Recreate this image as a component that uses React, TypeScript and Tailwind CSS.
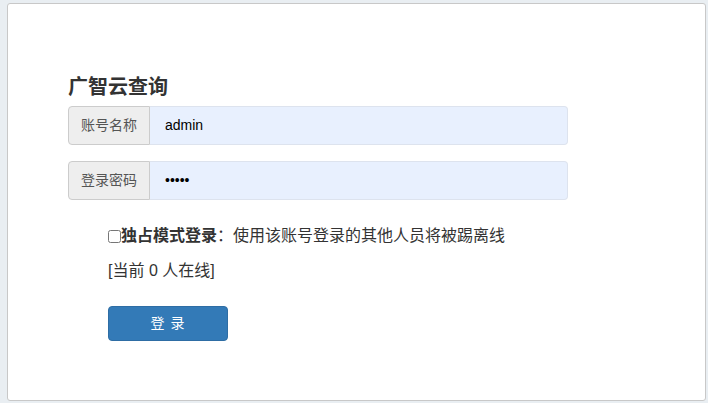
import { useState } from 'react';

// 广智云查询 — 登录页
const FONT = "font-['Liberation_Sans','Noto_Sans_CJK_SC',sans-serif]";

export default function App() {
  const [user, setUser] = useState('admin');
  const [pwd, setPwd] = useState('admin');
  const [exclusive, setExclusive] = useState(false);

  return (
    <div className={`h-[403px] w-[708px] bg-[#e9eef2] pl-[7px] pt-[3px] pr-[2px] pb-[2px] ${FONT}`}>
      <div className="h-full rounded-[3px] border border-[#c8c8c8] bg-white pl-[60px] pt-[70px]">
        <h3 className="text-[20px] font-bold leading-[26px] text-[#333]">广智云查询</h3>

        <div className="mt-[6px] flex w-[500px] flex-col gap-[16px]">
          <Field label="账号名称" value={user} onChange={setUser} />
          <Field label="登录密码" value={pwd} onChange={setPwd} type="password" />
        </div>

        <div className="ml-[40px] mt-[25px] text-[16px] text-[#333]">
          <label className="flex items-center leading-[22px]">
            <input
              type="checkbox"
              checked={exclusive}
              onChange={(e) => setExclusive(e.target.checked)}
              className="m-0 h-[13px] w-[13px] accent-[#ddd]"
            />
            <b className="font-bold">独占模式登录</b>：使用该账号登录的其他人员将被踢离线
          </label>
          <p className="mt-[13px] leading-[22px]">[当前 0 人在线]</p>
          <button className="mt-[24px] h-[35px] w-[120px] rounded-[4px] border border-[#2e6da4] bg-[#337ab7] text-[14px] tracking-[1px] text-white">
            登 录
          </button>
        </div>
      </div>
    </div>
  );
}

function Field({ label, value, onChange, type = 'text' }: {
  label: string; value: string; onChange: (v: string) => void; type?: string;
}) {
  return (
    <div className="flex h-[39px]">
      <span className="flex w-[82px] items-center justify-center rounded-l-[4px] border border-[#ccc] bg-[#eee] text-[14px] text-[#555]">
        {label}
      </span>
      <input
        type={type}
        value={value}
        onChange={(e) => onChange(e.target.value)}
        className="flex-1 rounded-r-[4px] border border-l-0 border-[#dde3ee] bg-[#e8f0fe] px-[15px] text-[14px] text-black outline-none"
      />
    </div>
  );
}
